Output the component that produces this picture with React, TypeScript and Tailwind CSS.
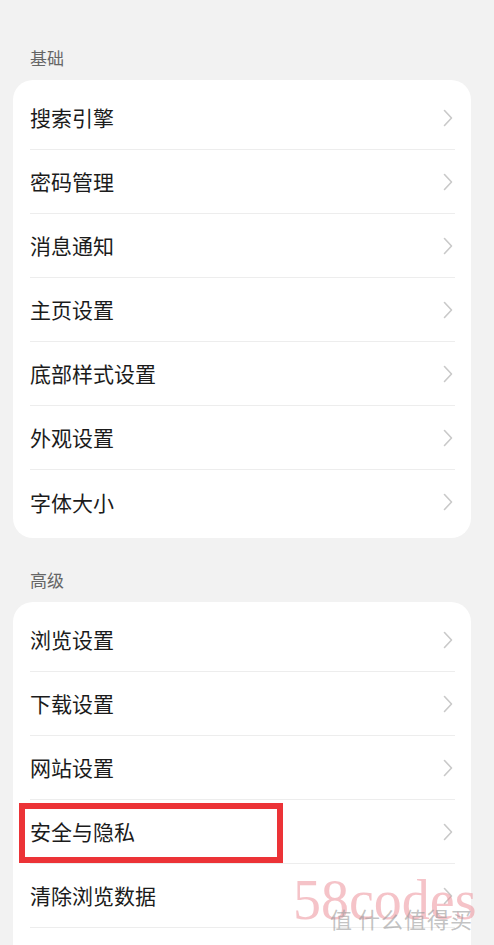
const basic = ["搜索引擎", "密码管理", "消息通知", "主页设置", "底部样式设置", "外观设置", "字体大小"];
const advanced = ["浏览设置", "下载设置", "网站设置", "安全与隐私", "清除浏览数据", ""];

function Chevron() {
	return (
		<svg width="10" height="18" viewBox="0 0 10 18" fill="none" className="shrink-0">
			<path d="M1.5 1.5 L8.5 9 L1.5 16.5" stroke="#c9c9c9" strokeWidth="1.6" strokeLinecap="round" strokeLinejoin="round" />
		</svg>
	);
}

function Row({ label, last, marked }: { label: string; last: boolean; marked?: boolean }) {
	return (
		<div
			className={`relative h-16 ml-[17px] mr-[16px] flex items-center ${last ? "" : "border-b border-[#ededed]"}`}
		>
			<span className="flex-1 text-[21px] text-[#1b1b1b] leading-none">{label}</span>
			{label && (
				<span className="mr-[2px]">
					<Chevron />
				</span>
			)}
			{marked && (
				<div className="absolute left-[-11px] top-[3px] w-[264px] h-[60px] border-[6px] border-[#ec3337]" />
			)}
		</div>
	);
}

function Section({ title, items, first }: { title: string; items: string[]; first?: boolean }) {
	return (
		<div className={first ? "" : "mt-[30px]"}>
			<div className="ml-[30px] h-6 flex items-center text-[17px] text-[#666666] mb-[10px]">{title}</div>
			<div className="ml-[13px] w-[458px] bg-white rounded-[20px] pt-[6px] pb-[4px]">
				{items.map((item, i) => (
					<Row key={i} label={item} last={i === items.length - 1} marked={item === "安全与隐私"} />
				))}
			</div>
		</div>
	);
}

export default function App() {
	return (
		<div
			className="relative w-[494px] h-[945px] overflow-hidden bg-[#f2f2f2] pt-[46px]"
			style={{ fontFamily: '"Noto Sans CJK SC", "Noto Sans", sans-serif' }}
		>
			<Section title="基础" items={basic} first />
			<Section title="高级" items={advanced} />

			{/* watermark */}
			<div className="absolute left-[293px] top-[872px] pointer-events-none">
				<span className="text-[56px] leading-none text-[#eb8791]/50 font-['Liberation_Serif',serif]">58codes</span>
			</div>
			<div className="absolute left-[330px] top-[907px] pointer-events-none flex items-center gap-[6px] text-[#9a9a9a]/60">
				<span className="text-[22px] leading-none">值</span>
				<span className="text-[22px] leading-none tracking-[1px]">什么值得买</span>
			</div>
		</div>
	);
}
